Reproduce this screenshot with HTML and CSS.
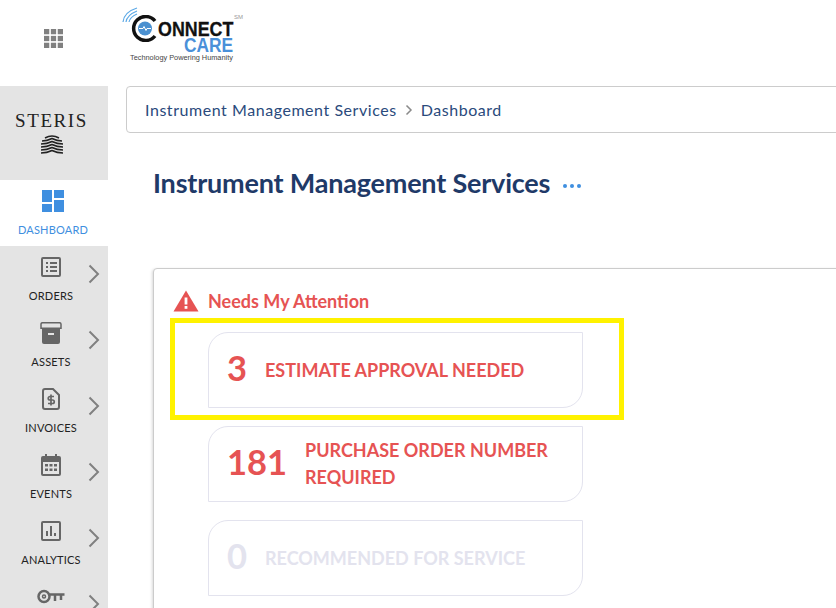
FILE: index.html
```html
<!DOCTYPE html>
<html lang="en">
<head>
    <meta charset="UTF-8">
    <meta name="viewport" content="width=device-width, initial-scale=1.0">
    <title>Instrument Management Services</title>
    <link rel="stylesheet" href="styles.css">
</head>
<body>
    <div class="app">
        <aside class="side">
            <div class="apps">
                <svg width="19" height="19" viewBox="0 0 18 18" fill="#808080">
                    <rect x="0" y="0" width="5" height="5"/><rect x="6.5" y="0" width="5" height="5"/><rect x="13" y="0" width="5" height="5"/>
                    <rect x="0" y="6.5" width="5" height="5"/><rect x="6.5" y="6.5" width="5" height="5"/><rect x="13" y="6.5" width="5" height="5"/>
                    <rect x="0" y="13" width="5" height="5"/><rect x="6.5" y="13" width="5" height="5"/><rect x="13" y="13" width="5" height="5"/>
                </svg>
            </div>
            <div class="brand">
                <div class="brand-name">STERIS</div>
                <svg width="24" height="20" viewBox="0 0 24 20" fill="none" stroke="#222" stroke-width="1.5">
                    <path d="M5 3 Q12 -1 19 3"/>
                    <path d="M2 6 Q7 6 12 3.5 Q17 6 22 6"/>
                    <path d="M1 9 Q7 9 12 6.5 Q17 9 23 9"/>
                    <path d="M1 12 Q7 12 12 9.5 Q17 12 23 12"/>
                    <path d="M1 15 Q7 15 12 12.5 Q17 15 23 15"/>
                    <path d="M1 18 Q7 18 12 15.5 Q17 18 23 18"/>
                </svg>
            </div>
            <nav>
                <div class="nav-item active">
                    <div class="nav-main">
                        <svg width="22" height="22" viewBox="0 0 22 22" fill="#3f8fe0">
                            <rect x="0" y="0" width="10" height="12"/><rect x="12" y="0" width="10" height="8"/>
                            <rect x="0" y="14" width="10" height="8"/><rect x="12" y="10" width="10" height="12"/>
                        </svg>
                        <span class="nav-label">DASHBOARD</span>
                    </div>
                </div>
                <div class="nav-item">
                    <div class="nav-main">
                        <svg width="22" height="22" viewBox="0 0 22 22" fill="none" stroke="#666" stroke-width="2">
                            <rect x="2" y="2" width="18" height="18" rx="1"/>
                            <path d="M6 7h2M10 7h7M6 11h2M10 11h7M6 15h2M10 15h7"/>
                        </svg>
                        <span class="nav-label">ORDERS</span>
                    </div>
                    <svg class="chev" width="12" height="20" viewBox="0 0 12 20"><path d="M1.5 1.5 10 10l-8.500 8.500" fill="none" stroke="#808080" stroke-width="2"/></svg>
                </div>
                <div class="nav-item">
                    <div class="nav-main">
                        <svg width="22" height="22" viewBox="0 0 22 22" fill="#666">
                            <path d="M1 1.500a1.500 1.500 0 0 1 1.500-1.500h17a1.500 1.500 0 0 1 1.500 1.500v4h-20z" fill="none" stroke="#666" stroke-width="1.500" transform="translate(0 .7)"/>
                            <path d="M2 7h18v13a2 2 0 0 1-2 2H4a2 2 0 0 1-2-2z"/>
                            <rect x="8" y="11" width="6" height="2" fill="#e4e4e4"/>
                        </svg>
                        <span class="nav-label">ASSETS</span>
                    </div>
                    <svg class="chev" width="12" height="20" viewBox="0 0 12 20"><path d="M1.500 1.500 10 10l-8.500 8.500" fill="none" stroke="#808080" stroke-width="2"/></svg>
                </div>
                <div class="nav-item">
                    <div class="nav-main">
                        <svg width="22" height="22" viewBox="0 0 22 22" fill="none" stroke="#666" stroke-width="2">
                            <path d="M3 3a2 2 0 0 1 2-2h8l6 6v12a2 2 0 0 1-2 2H5a2 2 0 0 1-2-2z"/>
                            <path d="M14 8.500h-4a1.500 1.500 0 0 0 0 3.500h2.500a1.500 1.500 0 0 1 0 3.500H8M11 6.500v11" stroke-width="1.700"/>
                        </svg>
                        <span class="nav-label">INVOICES</span>
                    </div>
                    <svg class="chev" width="12" height="20" viewBox="0 0 12 20"><path d="M1.500 1.500 10 10l-8.500 8.500" fill="none" stroke="#808080" stroke-width="2"/></svg>
                </div>
                <div class="nav-item">
                    <div class="nav-main">
                        <svg width="22" height="22" viewBox="0 0 22 22" fill="#666">
                            <rect x="5" y="0" width="2" height="4"/><rect x="15" y="0" width="2" height="4"/>
                            <path d="M1 4a2 2 0 0 1 2-2h16a2 2 0 0 1 2 2v16a2 2 0 0 1-2 2H3a2 2 0 0 1-2-2z"/>
                            <rect x="3" y="8" width="16" height="12" fill="#e4e4e4"/>
                            <path d="M5 10h3v2.500H5zM9.500 10h3v2.500h-3zM14 10h3v2.500h-3zM5 14.500h3V17H5zM9.500 14.500h3V17h-3zM14 14.500h3V17h-3z"/>
                        </svg>
                        <span class="nav-label">EVENTS</span>
                    </div>
                    <svg class="chev" width="12" height="20" viewBox="0 0 12 20"><path d="M1.500 1.500 10 10l-8.500 8.500" fill="none" stroke="#808080" stroke-width="2"/></svg>
                </div>
                <div class="nav-item">
                    <div class="nav-main">
                        <svg width="22" height="22" viewBox="0 0 22 22" fill="none" stroke="#666" stroke-width="2">
                            <rect x="2" y="2" width="18" height="18" rx="1"/>
                            <path d="M7 11v5M11 6v10M15 13v3"/>
                        </svg>
                        <span class="nav-label">ANALYTICS</span>
                    </div>
                    <svg class="chev" width="12" height="20" viewBox="0 0 12 20"><path d="M1.500 1.500 10 10l-8.500 8.500" fill="none" stroke="#808080" stroke-width="2"/></svg>
                </div>
                <div class="nav-item">
                    <div class="nav-main">
                        <svg class="key-icon" width="28" height="15" viewBox="0 0 28 15" fill="none" stroke="#666" stroke-width="2.500">
                            <circle cx="7" cy="7.500" r="5.500"/>
                            <circle cx="7" cy="7.500" r="1.500" stroke-width="1.500"/>
                            <path d="M12.500 5.500H27.500M18 5.500V12M24 5.500V11"/>
                        </svg>
                    </div>
                    <svg class="chev" width="12" height="20" viewBox="0 0 12 20"><path d="M1.500 1.500 10 10l-8.500 8.500" fill="none" stroke="#808080" stroke-width="2"/></svg>
                </div>
            </nav>
        </aside>

        <main class="main">
            <header class="topbar">
                <div class="logo">
                    <svg class="logo-waves" width="16" height="16" viewBox="0 0 16 16" fill="none" stroke="#5ba8e6" stroke-width="1.200">
                        <path d="M1 15 Q2 5 15 1"/>
                        <path d="M4 15 Q5 8 15 4"/>
                        <path d="M7 15 Q8 10 15 7"/>
                    </svg>
                    <span class="logo-sm">SM</span>
                    <div class="logo-top">
                        <svg width="28" height="27" viewBox="0 0 28 27">
                            <path d="M25 6 A12 12 0 1 0 25 21" fill="none" stroke="#111" stroke-width="3.500"/>
                            <circle cx="15" cy="13.500" r="7" fill="#4a90d0"/>
                            <path d="M9 13.500h4l1-2 2 4 1-2h4" fill="none" stroke="#fff" stroke-width="1"/>
                        </svg>
                        <span class="logo-word">ONNECT</span>
                    </div>
                    <div class="logo-care">CARE</div>
                    <div class="logo-tag">Technology Powering Humanity</div>
                </div>
            </header>

            <div class="crumb">
                <span>Instrument Management Services</span>
                <svg width="8" height="12" viewBox="0 0 8 12"><path d="M1.500 1.500 6 6l-4.500 4.500" fill="none" stroke="#8a8a8a" stroke-width="1.500"/></svg>
                <span>Dashboard</span>
            </div>

            <div class="title-row">
                <h1>Instrument Management Services</h1>
                <div class="dots"><i></i><i></i><i></i></div>
            </div>

            <section class="panel">
                <div class="panel-head">
                    <svg width="26" height="22" viewBox="0 0 26 22">
                        <path d="M13 0.500 25.500 21.500H.5z" fill="#e65353"/>
                        <rect x="11.600" y="7.500" width="2.800" height="7" fill="#fff"/>
                        <rect x="11.600" y="16" width="2.800" height="2.800" fill="#fff"/>
                    </svg>
                    <span>Needs My Attention</span>
                </div>
                <div class="stat-list">
                    <div class="stat">
                        <span class="stat-num">3</span>
                        <span class="stat-text">ESTIMATE APPROVAL NEEDED</span>
                    </div>
                    <div class="stat">
                        <span class="stat-num">181</span>
                        <span class="stat-text">PURCHASE ORDER NUMBER REQUIRED</span>
                    </div>
                    <div class="stat off">
                        <span class="stat-num">0</span>
                        <span class="stat-text">RECOMMENDED FOR SERVICE</span>
                    </div>
                </div>
                <div class="highlight"></div>
            </section>
        </main>
    </div>
</body>
</html>
```

FILE: styles.css
```css
html, body {
    margin: 0;
    height: 100%;
    overflow: hidden;
}

body {
    font-family: Lato, "Open Sans", sans-serif;
    background-color: white;
}

.app {
    display: flex;
    height: 608px;
    overflow: hidden;
}

/* sidebar */
.side {
    width: 108px;
    flex: none;
    background-color: #e4e4e4;
}

.apps {
    height: 86px;
    background: white;
    display: flex;
    align-items: center;
    justify-content: center;
    padding: 0 2px 10px 0;
    box-sizing: border-box;
}

.brand {
    height: 94px;
    display: flex;
    flex-direction: column;
    align-items: center;
    padding: 25px 5px 0 0;
    box-sizing: border-box;
}

.brand-name {
    font-family: "Liberation Serif", serif;
    font-size: 19px;
    line-height: 20px;
    letter-spacing: 1.6px;
    color: #222;
    margin-bottom: 4px;
}

.nav-item {
    height: 66px;
    display: flex;
    align-items: flex-start;
}

.nav-item.active {
    background: white;
}

.nav-main {
    width: 102px;
    flex: none;
    padding-top: 10px;
    display: flex;
    flex-direction: column;
    align-items: center;
}

.nav-item.active .nav-main {
    width: 106px;
}

.nav-label {
    margin-top: 11px;
    font-size: 11px;
    line-height: 14px;
    letter-spacing: .2px;
    color: #222;
}

.nav-item.active .nav-label {
    color: #3f8fe0;
}

.key-icon {
    margin-top: 3px;
}

.chev {
    flex: none;
    margin-left: -14px;
    margin-top: 18px;
}

/* main area */
.main {
    flex: 1;
    min-width: 0;
}

.topbar {
    height: 86px;
}

.logo {
    width: 130px;
    padding: 15px 0 0 22px;
    position: relative;
    color: #111;
}

.logo-waves {
    position: absolute;
    left: 14px;
    top: 7px;
}

.logo-sm {
    position: absolute;
    left: 126px;
    top: 14px;
    font-family: "Liberation Sans", sans-serif;
    font-size: 6px;
    color: #999;
}

.logo-top {
    display: flex;
    align-items: center;
    height: 27px;
}

.logo-word {
    font-family: "Liberation Sans", sans-serif;
    font-weight: 700;
    font-size: 21px;
    line-height: 16px;
    -webkit-text-stroke: .3px #111;
    transform: scaleX(.85);
    transform-origin: left;
}

.logo-care {
    font-family: "Liberation Sans", sans-serif;
    font-weight: 700;
    font-size: 19.5px;
    line-height: 14px;
    color: #4a90d9;
    margin-left: 54px;
    margin-top: -4px;
    transform: scaleX(.89);
    transform-origin: left;
}

.logo-tag {
    font-family: "Liberation Sans", sans-serif;
    font-size: 7.35px;
    line-height: 10px;
    color: #444;
    margin-top: 1px;
    white-space: nowrap;
}

.crumb {
    display: flex;
    align-items: center;
    gap: 8px;
    width: 760px;
    height: 47px;
    box-sizing: border-box;
    margin-left: 18px;
    padding-left: 18px;
    border: 1px solid #ccc;
    border-radius: 4px;
    font-size: 16px;
    letter-spacing: .55px;
    color: #2a4a7c;
}

.title-row {
    display: flex;
    align-items: center;
    gap: 13px;
    margin: 29px 0 0 45px;
    height: 40px;
}

h1 {
    margin: 0;
    font-size: 27px;
    font-weight: 700;
    letter-spacing: -.2px;
    color: #1f3a68;
    white-space: nowrap;
}

.dots {
    display: flex;
    gap: 3px;
    margin-top: 7px;
}

.dots i {
    width: 4px;
    height: 4px;
    border-radius: 50%;
    background-color: #3f8fe0;
}

.panel {
    position: relative;
    width: 760px;
    height: 400px;
    box-sizing: border-box;
    margin: 66px 0 0 45px;
    padding: 20px 0 0 19px;
    background: white;
    border: 1px solid #ccc;
    border-radius: 4px;
    box-shadow: -1px 1px 3px rgba(0, 0, 0, 0.15);
}

.panel-head {
    display: flex;
    align-items: center;
    gap: 9px;
    font-size: 18px;
    font-weight: 700;
    color: #e65353;
    height: 24px;
}

.stat-list {
    display: flex;
    flex-direction: column;
    gap: 18px;
    margin: 19px 0 0 35px;
}

.stat {
    display: flex;
    align-items: center;
    width: 375px;
    height: 76px;
    box-sizing: border-box;
    padding: 0 14px 0 18px;
    gap: 18px;
    border: 1px solid #e3e3ee;
    border-radius: 20px 0 20px 0;
    color: #e65353;
}

.stat-num {
    font-size: 34.5px;
    font-weight: 700;
    margin-bottom: 5px;
}

.stat-text {
    font-size: 18px;
    font-weight: 700;
    line-height: 27px;
}

.stat.off {
    color: #e3e3ee;
}

/* yellow annotation drawn over the first tile */
.highlight {
    position: absolute;
    left: 16px;
    top: 49px;
    width: 454px;
    height: 102px;
    box-sizing: border-box;
    border: 5px solid #fff200;
}
```
